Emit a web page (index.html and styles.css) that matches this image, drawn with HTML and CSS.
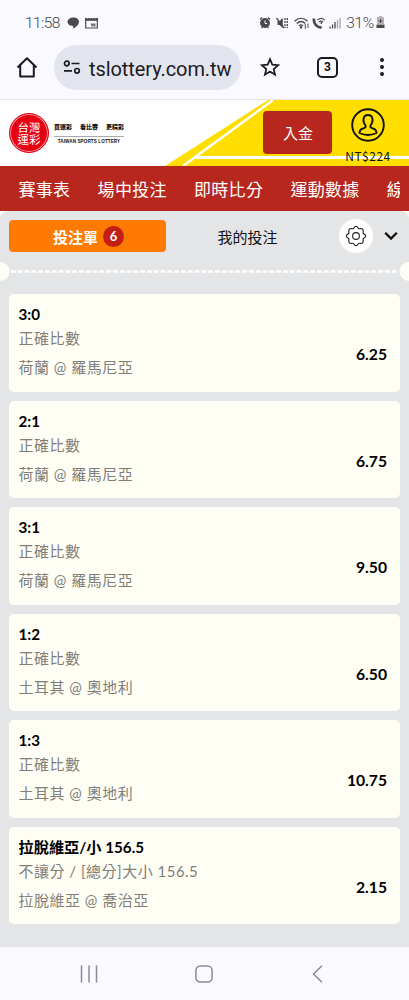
FILE: index.html
```html
<!DOCTYPE html>
<html lang="zh-Hant">
<head>
    <meta charset="UTF-8">
    <meta name="viewport" content="width=device-width, initial-scale=1.0">
    <title>台灣運彩</title>
    <link rel="stylesheet" href="styles.css">
</head>
<body>
    <!-- Status bar -->
    <div class="status-bar">
        <span class="time">11:58</span>
        <svg class="status-left" width="32" height="14" viewBox="0 0 32 14">
            <path d="M6.500 1.500C10 1.500 12 3.500 12 5.800C12 8.500 9.500 10.500 6.500 12.800L6 10C2.500 10 .5 8 .5 5.800C.5 3.500 3 1.500 6.500 1.500Z" fill="#4a4a4c"/>
            <path d="M18.700 2.500h11.600v9.500H18.700z" fill="none" stroke="#4a4a4c" stroke-width="1.200"/>
            <path d="M18 2h13v2.800H18z" fill="#4a4a4c"/>
            <path d="M20 2.300h9" stroke="#bbb" stroke-dasharray="1 1.500"/>
            <path d="M23.500 7.500h5v3h-4z" fill="#77777a"/>
        </svg>
        <svg class="status-right" width="82" height="14" viewBox="0 0 82 14">
            <g fill="none" stroke="#4a4a4c" stroke-width="1.300">
                <circle cx="6" cy="7" r="4.300" fill="#4a4a4c"/>
                <path d="M1 3.500l2-2M11 3.500l-2-2M2.500 12l1-1M9.500 12l-1-1"/>
                <path d="M6 4.500v3h2.200" stroke="#fff" stroke-width="1"/>
                <path d="M18.500 5h2l3.300-3v10l-3.300-3h-2z" fill="#4a4a4c" stroke="none"/>
                <path d="M17.500 2l7.500 10"/>
                <path d="M26 2v10M28.300 2v10" stroke-dasharray="2 1"/>
                <path d="M35.500 5.300c4-4 9-4 13 0M37.700 7.500c3-2.800 5.700-2.800 8.600 0M39.800 9.700c1.700-1.300 2.700-1.300 4.300 0"/>
                <circle cx="42" cy="11.300" r=".7"/>
                <path d="M46.300 8v5M49 12V7.500" stroke-width="1"/>
                <path d="M55 2.500c-.8 5 3 9 7.700 9" stroke-width="2.700"/>
                <path d="M58.500 4c2.300-2 4.800-2 7 0M60 6c1.500-1.200 2.800-1.200 4 0"/>
                <path d="M62.300 6v2"/>
                <path d="M71 12.500v-2M73.500 12.500v-4M76 12.500v-6.500"/>
                <path d="M78.500 12.500V4M81 12.500V2" stroke="#a5a5aa"/>
            </g>
        </svg>
        <span class="percent">31%</span>
        <svg class="battery" width="9" height="13" viewBox="0 0 9 13">
            <path d="M3 0h3v1h2v7H1V1h2z" fill="#b5b5ba"/>
            <path d="M4.500 3v4M2.500 5h4" stroke="#4a4a4c"/>
            <path d="M.5 8.500h8v3.500H.5z" fill="#4a4a4c"/>
        </svg>
    </div>

    <!-- Browser toolbar -->
    <div class="toolbar">
        <svg class="home" width="22" height="22" viewBox="0 0 22 22">
            <path d="M1.500 11.500L11 2.200l9.500 9.300M4.200 9.500v11h13.600v-11" fill="none" stroke="#1b1b1f" stroke-width="2" stroke-linejoin="round"/>
        </svg>
        <div class="address">
            <svg width="18" height="14" viewBox="0 0 18 14">
                <g fill="none" stroke="#1b1b1f" stroke-width="1.700">
                    <circle cx="3.800" cy="3.500" r="2.300"/>
                    <path d="M8.500 3.500h8M1 10.800h8"/>
                    <circle cx="14" cy="10.800" r="2.300"/>
                </g>
            </svg>
            <span>tslottery.com.tw</span>
        </div>
        <svg class="star" width="20" height="20" viewBox="0 0 20 20">
            <path d="M10 2.200l2.300 5.400 5.900.5-4.500 3.900 1.400 5.700-5.100-3.100-5.100 3.100L6.300 12 1.800 8.100l5.900-.5z" fill="none" stroke="#1b1b1f" stroke-width="1.700"/>
        </svg>
        <div class="tabs">3</div>
        <div class="dots"><i></i><i></i><i></i></div>
    </div>

    <!-- Site header -->
    <div class="header">
        <svg class="header-bg" width="409" height="66" viewBox="0 0 409 66">
            <path d="M268 0H409V66H165z" fill="#ffde00"/>
            <path d="M273 0L183 66" stroke="#fff" stroke-width="2.500"/>
            <path d="M196 57.500H409" stroke="#fff" stroke-width="3"/>
        </svg>
        <div class="logo">
            <div class="logo-mark"><span>台灣</span><span>運彩</span></div>
            <div class="logo-text">
                <div class="slogan"><span>買運彩</span><span>看比賽</span><span>更精彩</span></div>
                <div class="english">TAIWAN SPORTS LOTTERY</div>
            </div>
        </div>
        <button class="deposit">入金</button>
        <div class="account">
            <svg width="34" height="34" viewBox="0 0 34 34">
                <g fill="none" stroke="#111" stroke-width="1.900">
                    <circle cx="17" cy="17" r="15.800"/>
                    <path d="M14.500 17.500C11 13 12 7 17 7s6 6 2.500 10.500c-.5 2 .5 2.300 3 3.200 2.500 1 3 2.300 3 4.300C20 27.500 14 27.500 8.500 25c0-2 .5-3.300 3-4.300 2.500-.9 3.500-1.200 3-3.200z"/>
                </g>
            </svg>
            <span>NT$224</span>
        </div>
    </div>

    <div class="nav">
        <div class="nav-items">
            <span>賽事表</span>
            <span>場中投注</span>
            <span>即時比分</span>
            <span>運動數據</span>
            <span>線</span>
        </div>
    </div>

    <!-- Bet slip -->
    <div class="slip-wrap">
        <div class="slip">
            <div class="slip-tabs">
                <div class="tab-active">投注單 <span class="count">6</span></div>
                <div class="tab">我的投注</div>
                <div class="settings">
                    <svg width="22" height="22" viewBox="0 0 22 22">
                        <g fill="none" stroke="#222" stroke-width="1.100" stroke-linejoin="round">
                            <circle cx="11" cy="11" r="3.400"/>
                            <path d="M9.300 2.300Q11 .2 12.700 2.300Q13.300 4.200 15.400 3.600Q18.400 3.300 18.200 6.300Q17.500 8.600 19.600 9.300Q21.800 11 19.600 12.700Q17.500 13.400 18.200 15.700Q18.400 18.700 15.400 18.400Q13.300 17.800 12.700 19.700Q11 21.800 9.300 19.700Q8.700 17.800 6.600 18.400Q3.600 18.700 3.800 15.700Q4.500 13.400 2.400 12.700Q.2 11 2.400 9.300Q4.500 8.600 3.800 6.300Q3.600 3.300 6.600 3.600Q8.700 4.200 9.300 2.300z"/>
                        </g>
                    </svg>
                </div>
                <svg class="chevron" width="14" height="10" viewBox="0 0 14 10">
                    <path d="M1.200 1.700L7 7.500l5.800-5.800" fill="none" stroke="#111" stroke-width="2.300"/>
                </svg>
            </div>
            <div class="divider">
                <svg width="409" height="19" viewBox="0 0 409 19">
                    <path d="M11 9.500H398" stroke="#fff" stroke-width="2.300" stroke-dasharray="4.800 2"/>
                    <circle cx="0" cy="9.500" r="9.500" fill="#fffef5"/>
                    <circle cx="409" cy="9.500" r="9.500" fill="#fffef5"/>
                </svg>
            </div>
            <div class="bets">
                <div class="bet">
                    <div class="info">
                        <h3>3:0</h3>
                        <p>正確比數</p>
                        <p class="teams">荷蘭 @ 羅馬尼亞</p>
                    </div>
                    <div class="odds">6.25</div>
                </div>
                <div class="bet">
                    <div class="info">
                        <h3>2:1</h3>
                        <p>正確比數</p>
                        <p class="teams">荷蘭 @ 羅馬尼亞</p>
                    </div>
                    <div class="odds">6.75</div>
                </div>
                <div class="bet">
                    <div class="info">
                        <h3>3:1</h3>
                        <p>正確比數</p>
                        <p class="teams">荷蘭 @ 羅馬尼亞</p>
                    </div>
                    <div class="odds">9.50</div>
                </div>
                <div class="bet">
                    <div class="info">
                        <h3>1:2</h3>
                        <p>正確比數</p>
                        <p class="teams">土耳其 @ 奧地利</p>
                    </div>
                    <div class="odds">6.50</div>
                </div>
                <div class="bet">
                    <div class="info">
                        <h3>1:3</h3>
                        <p>正確比數</p>
                        <p class="teams">土耳其 @ 奧地利</p>
                    </div>
                    <div class="odds">10.75</div>
                </div>
                <div class="bet">
                    <div class="info">
                        <h3>拉脫維亞/小 156.5</h3>
                        <p>不讓分 / [總分]大小 156.5</p>
                        <p class="teams">拉脫維亞 @ 喬治亞</p>
                    </div>
                    <div class="odds">2.15</div>
                </div>
            </div>
        </div>
    </div>

    <!-- System navigation -->
    <div class="system-nav">
        <svg width="18" height="18" viewBox="0 0 18 18"><path d="M1.500 .5v17M9 .5v17M16.500 .5v17" stroke="#8a8a90" stroke-width="1.500"/></svg>
        <svg width="18" height="18" viewBox="0 0 18 18"><rect x=".9" y=".9" width="16.200" height="16.200" rx="4.500" fill="none" stroke="#8a8a90" stroke-width="1.500"/></svg>
        <svg width="18" height="18" viewBox="0 0 18 18"><path d="M13 .7L4.500 9l8.500 8.300" fill="none" stroke="#8a8a90" stroke-width="1.500"/></svg>
    </div>
</body>
</html>
```
FILE: styles.css
```css
* {
    box-sizing: border-box;
}

body {
    margin: 0;
    width: 409px;
    height: 1000px;
    overflow: hidden;
    display: flex;
    flex-direction: column;
    background-color: #faf9ff;
    font-family: Lato, "Noto Sans CJK TC", sans-serif;
    color: #111;
}

svg {
    display: block;
    flex: none;
}

/* Status bar */
.status-bar {
    height: 45px;
    padding: 0 24px 0 25px;
    display: flex;
    align-items: center;
    font-family: Roboto, sans-serif;
    font-size: 15.5px;
    font-weight: 300;
    color: #444;
}

.time {
    letter-spacing: -0.6px;
}

.status-left {
    margin-left: 7px;
}

.status-right {
    margin-left: auto;
}

.percent {
    margin-left: 5px;
    letter-spacing: -0.3px;
}

.battery {
    margin-left: 2px;
}

/* Browser toolbar */
.toolbar {
    height: 55px;
    padding: 0 25px 10px 16px;
    display: flex;
    align-items: center;
    border-bottom: 1px solid #e6e5ea;
    font-family: Roboto, sans-serif;
}

.address {
    width: 187px;
    height: 45px;
    margin-left: 16px;
    padding-left: 9px;
    display: flex;
    align-items: center;
    gap: 8px;
    border-radius: 23px;
    background-color: #e3e5ee;
    font-size: 20px;
    color: #1b1b1f;
}

.address span {
    padding-top: 3px;
    letter-spacing: -0.08px;
    white-space: nowrap;
}

.star {
    margin-left: 19px;
}

.tabs {
    width: 21px;
    height: 21px;
    margin-left: 37px;
    border: 2px solid #1b1b1f;
    border-radius: 5px;
    font-size: 12px;
    font-weight: bold;
    line-height: 17px;
    text-align: center;
}

.dots {
    margin-left: auto;
    display: flex;
    flex-direction: column;
    gap: 2.5px;
}

.dots i {
    width: 4.5px;
    height: 4.5px;
    border-radius: 50%;
    background-color: #1b1b1f;
}

/* Site header */
.header {
    height: 66px;
    position: relative;
    display: flex;
    background-color: #fff;
}

.header-bg {
    position: absolute;
    top: 0;
    left: 0;
}

.logo,
.deposit,
.account {
    position: relative;
}

.logo {
    display: flex;
    padding: 13px 0 0 9px;
}

.logo-mark {
    width: 40px;
    height: 40px;
    padding-top: 2px;
    display: flex;
    flex-direction: column;
    align-items: center;
    justify-content: center;
    border: 1px solid #e60012;
    border-radius: 50%;
    background-color: #e60012;
    box-shadow: inset 0 0 0 1px #f5a0a6;
    color: #fff;
    font-size: 11.5px;
    line-height: 12px;
}

.logo-mark span {
    height: 12px;
}

.logo-text {
    width: 70px;
    margin-left: 5px;
    padding-top: 8px;
}

.slogan {
    display: flex;
    justify-content: space-between;
    padding-bottom: 4px;
    border-bottom: 1px solid #aaa;
    font-size: 6px;
    font-weight: 900;
    line-height: 11px;
}

.english {
    padding-top: 1px;
    font-family: "Liberation Sans", sans-serif;
    font-size: 4.6px;
    font-weight: bold;
    line-height: 8px;
    letter-spacing: 0.1px;
    text-align: center;
    white-space: nowrap;
}

.deposit {
    width: 69px;
    height: 43px;
    margin: 11px 0 0 139px;
    padding: 0 0 0 1px;
    border: none;
    border-radius: 4px;
    background-color: #b7271d;
    color: #fff;
    font-family: inherit;
    font-size: 15px;
}

.account {
    width: 50px;
    margin: 8px 0 0 11px;
    display: flex;
    flex-direction: column;
    align-items: center;
    font-family: "Noto Sans CJK TC", sans-serif;
    font-size: 12px;
    letter-spacing: 0.5px;
    line-height: 27px;
}

.nav {
    height: 45px;
    padding: 0 9px;
    background-color: #b7271d;
}

.nav-items {
    height: 45px;
    padding-left: 9.5px;
    overflow: hidden;
    display: flex;
    align-items: center;
    gap: 27.2px;
    color: #fff;
    font-size: 17px;
    letter-spacing: 0.3px;
    white-space: nowrap;
}

/* Bet slip */
.slip-wrap {
    height: 736px;
    background-color: #fffef5;
}

.slip {
    height: 736px;
    border-radius: 8px 8px 0 0;
    background-color: #e4e5e7;
}

.slip-tabs {
    height: 51px;
    padding: 0 11px 1px 9px;
    display: flex;
    align-items: center;
}

.tab-active {
    width: 157px;
    height: 32px;
    display: flex;
    align-items: center;
    justify-content: center;
    gap: 5px;
    padding-left: 2px;
    border-radius: 4px;
    background-color: #ff7a00;
    color: #fff;
    font-size: 15px;
    font-weight: bold;
}

.count {
    width: 21px;
    height: 21px;
    border-radius: 50%;
    background-color: #c41e14;
    font-size: 13px;
    line-height: 21px;
    text-align: center;
}

.tab {
    width: 163px;
    font-size: 15px;
    text-align: center;
}

.settings {
    width: 34px;
    height: 34px;
    margin-left: 10px;
    display: flex;
    align-items: center;
    justify-content: center;
    border-radius: 50%;
    background-color: #fff;
}

.chevron {
    margin-left: auto;
}

.divider {
    height: 19px;
}

.bets {
    padding: 13px 9px 0;
    display: flex;
    flex-direction: column;
    gap: 9px;
}

.bet {
    height: 97.5px;
    padding: 0 13px 0 9.5px;
    display: flex;
    justify-content: space-between;
    border-radius: 5px;
    background-color: #fffef5;
}

.info {
    padding-top: 9px;
}

.bet h3 {
    margin: 0;
    color: #000;
    font-size: 15.2px;
    font-weight: bold;
    line-height: 23px;
}

.bet p {
    margin: 0;
    color: #7f7e79;
    font-size: 15px;
    font-weight: 400;
    letter-spacing: 0.5px;
    line-height: 24px;
}

.bet .teams {
    margin-top: 5px;
}

.odds {
    padding-top: 48px;
    color: #000;
    font-size: 15.7px;
    font-weight: bold;
    line-height: 24px;
}

/* System navigation */
.system-nav {
    height: 53px;
    padding: 0 82px 0 80px;
    display: flex;
    align-items: center;
    justify-content: space-between;
}
```
